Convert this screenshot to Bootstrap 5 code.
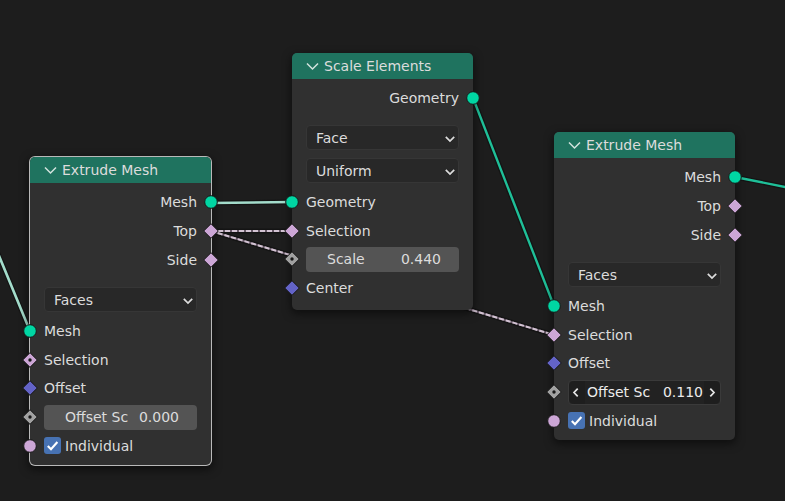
<!DOCTYPE html>
<html lang="en">
<head>
<meta charset="utf-8">
<meta name="viewport" content="width=device-width, initial-scale=1">
<title>Geometry Nodes</title>
<link href="https://cdn.jsdelivr.net/npm/bootstrap@5.3.0/dist/css/bootstrap.min.css" rel="stylesheet">
<style>
  body { background: #1d1d1d; color: #dcdcdc; font: 14px/20px "DejaVu Sans", sans-serif; }
  .node-canvas { min-height: 100vh; }
  .wires { inset: 0; z-index: 0; }
  .wires .shade { stroke: #141414; stroke-width: 5; }
  .wires .geo { stroke: #1fbf98; stroke-width: 2.4; }
  .wires .geo-active { stroke: #a3dccb; stroke-width: 2.6; }
  .wires .field-link { stroke: #d3c3d3; stroke-width: 2; stroke-dasharray: 5 2; }
  .wires .field-base { stroke: #675967; stroke-width: 2; }

  .node { width: 181px; background: #303030; border-radius: 5px; box-shadow: 0 3px 9px 1px rgba(0, 0, 0, .5); z-index: 1; padding-bottom: 5px; }
  .node.selected { box-shadow: 0 0 0 1px #b9b9b9, 0 3px 9px 2px rgba(0, 0, 0, .5); }
  .node-a { left: 30px; top: 157px; }
  .node-b { left: 292px; top: 53px; padding-bottom: 8px; }
  .node-c { left: 554px; top: 132px; }

  .node-title { height: 26px; padding: 0 14px; gap: 5px; background: #1f735f; border-radius: 5px 5px 0 0; }
  .node-title h2 { font-size: 14px; line-height: 20px; }
  .fold { width: 13px; height: 20px; color: #d3e3de; }

  .outs { padding-top: 5px; }
  .sockets { display: grid; grid-auto-rows: 1fr; }
  .n1 { min-height: 33px; }
  .n3 { min-height: 91px; }
  .n4 { min-height: 114px; }
  .n5 { min-height: 143px; }
  .sock { padding: 0 14px; }
  .options { padding: 13px 14px 5px; gap: 8px; }

  .pin { width: 16px; height: 16px; top: 50%; transform: translateY(-50%); }
  .pin-in { left: -8px; }
  .pin-out { right: -8px; }

  .options .form-select {
    height: 25px; padding: 0 24px 0 9px; font-size: 14px; line-height: 20px; color: #dcdcdc;
    background-color: #282828; border: 1px solid #363636; border-radius: 4px;
    background-image: url("data:image/svg+xml,%3Csvg xmlns='http://www.w3.org/2000/svg' viewBox='0 0 12 8'%3E%3Cpath d='M1.8 1.8 6 6 10.2 1.8' fill='none' stroke='%23dcdcdc' stroke-width='1.7'/%3E%3C/svg%3E");
    background-size: 12px 8px; background-position: right 2px top 9px;
  }
  .value-box { height: 25px; padding: 0 18px 0 21px; background: #545454; border-radius: 4px; }
  .value-box input { min-width: 0; padding: 0; border: 0; outline: 0; background: transparent; color: #dcdcdc; text-align: right; line-height: 20px; }
  .value-box.hot { padding: 0; background: #222; border: 1px solid #3a3a3a; color: #ececec; }
  .value-box.hot input { color: #ececec; }
  .step { width: 16px; height: 23px; background: #1e1e1e; color: #e6e6e6; }
  .value-box.hot label { padding-left: 2px; }
  .value-box.hot .step-up { margin-left: 1px; }
  .sock .form-check-input { width: 17px; height: 17px; margin: 0 4px 0 0; border: 0; border-radius: 3px; }
  .sock .form-check-input:checked {
    background-color: #4772b3; background-size: 17px 17px;
    background-image: url("data:image/svg+xml,%3Csvg xmlns='http://www.w3.org/2000/svg' viewBox='0 0 17 17'%3E%3Cpath d='M3.8 8.9 7 12.2 13.4 5' fill='none' stroke='%23fff' stroke-width='2.1'/%3E%3C/svg%3E");
  }
</style>
<script src="https://cdn.jsdelivr.net/npm/bootstrap@5.3.0/dist/js/bootstrap.bundle.min.js"></script>
</head>
<body>
<svg class="d-none" aria-hidden="true">
  <symbol id="geo" viewBox="0 0 16 16"><circle cx="8" cy="8" r="6.3" fill="#00d6a3" stroke="#171717"/></symbol>
  <symbol id="bool" viewBox="0 0 16 16"><path d="M8 .7 15.3 8 8 15.3.7 8Z" fill="#cca6d6" stroke="#171717"/></symbol>
  <symbol id="bool-dot" viewBox="0 0 16 16"><path d="M8 .7 15.3 8 8 15.3.7 8Z" fill="#cca6d6" stroke="#171717"/><circle cx="8" cy="8" r="1.7" fill="#171717"/></symbol>
  <symbol id="vec" viewBox="0 0 16 16"><path d="M8 .7 15.3 8 8 15.3.7 8Z" fill="#6363c7" stroke="#171717"/></symbol>
  <symbol id="num" viewBox="0 0 16 16"><path d="M8 .7 15.3 8 8 15.3.7 8Z" fill="#a1a1a1" stroke="#171717"/><circle cx="8" cy="8" r="1.7" fill="#171717"/></symbol>
  <symbol id="single" viewBox="0 0 16 16"><circle cx="8" cy="8" r="6.3" fill="#cca6d6" stroke="#171717"/></symbol>
  <symbol id="chev" viewBox="0 0 13 20"><path d="M1 7.5 6.5 13 12 7.5" fill="none" stroke="currentColor" stroke-width="1.5"/></symbol>
  <symbol id="prev" viewBox="0 0 16 23"><path d="M8.7 7.7 5 11.5 8.7 15.3" fill="none" stroke="currentColor" stroke-width="1.7"/></symbol>
  <symbol id="next" viewBox="0 0 16 23"><path d="M6.3 7.7 10 11.5 6.3 15.3" fill="none" stroke="currentColor" stroke-width="1.7"/></symbol>
</svg>

<main class="node-canvas position-relative overflow-hidden">
  <svg class="wires position-absolute w-100 h-100" fill="none" aria-hidden="true">
    <path class="shade" d="M-10 234 30 331M211 203 292 202M473 98 554 306M735 177 800 190M211 231 292 231M211 231 554 335"/>
    <path class="geo-active" d="M-10 234 30 331M211 203 292 202"/>
    <path class="geo" d="M473 98 554 306M735 177 800 190"/>
    <path class="field-base" d="M211 231 292 231M211 231 554 335"/>
    <path class="field-link" d="M211 231 292 231M211 231 554 335"/>
  </svg>

  <section class="node node-a selected position-absolute">
    <header class="node-title d-flex align-items-center">
      <button class="fold btn p-0 border-0 d-flex" type="button" aria-label="Collapse"><svg width="13" height="20"><use href="#chev"/></svg></button>
      <h2 class="m-0 fw-normal">Extrude Mesh</h2>
    </header>
    <div class="outs sockets n3 text-end">
      <div class="sock position-relative d-flex align-items-center justify-content-end">Mesh<svg class="pin pin-out position-absolute"><use href="#geo"/></svg></div>
      <div class="sock position-relative d-flex align-items-center justify-content-end">Top<svg class="pin pin-out position-absolute"><use href="#bool"/></svg></div>
      <div class="sock position-relative d-flex align-items-center justify-content-end">Side<svg class="pin pin-out position-absolute"><use href="#bool"/></svg></div>
    </div>
    <div class="options d-flex flex-column">
      <select class="form-select" aria-label="Mode"><option>Faces</option></select>
    </div>
    <div class="sockets n5">
      <div class="sock position-relative d-flex align-items-center"><svg class="pin pin-in position-absolute"><use href="#geo"/></svg>Mesh</div>
      <div class="sock position-relative d-flex align-items-center"><svg class="pin pin-in position-absolute"><use href="#bool-dot"/></svg>Selection</div>
      <div class="sock position-relative d-flex align-items-center"><svg class="pin pin-in position-absolute"><use href="#vec"/></svg>Offset</div>
      <div class="sock position-relative d-flex align-items-center"><svg class="pin pin-in position-absolute"><use href="#num"/></svg>
        <div class="value-box d-flex align-items-center w-100"><label class="text-nowrap" for="a-scale">Offset Sc</label><input class="flex-fill w-25" id="a-scale" type="text" value="0.000"></div>
      </div>
      <div class="sock position-relative d-flex align-items-center"><svg class="pin pin-in position-absolute"><use href="#single"/></svg>
        <input class="form-check-input" id="a-ind" type="checkbox" checked><label for="a-ind">Individual</label>
      </div>
    </div>
  </section>

  <section class="node node-b position-absolute">
    <header class="node-title d-flex align-items-center">
      <button class="fold btn p-0 border-0 d-flex" type="button" aria-label="Collapse"><svg width="13" height="20"><use href="#chev"/></svg></button>
      <h2 class="m-0 fw-normal">Scale Elements</h2>
    </header>
    <div class="outs sockets n1">
      <div class="sock position-relative d-flex align-items-center justify-content-end">Geometry<svg class="pin pin-out position-absolute"><use href="#geo"/></svg></div>
    </div>
    <div class="options d-flex flex-column">
      <select class="form-select" aria-label="Domain"><option>Face</option></select>
      <select class="form-select" aria-label="Scale mode"><option>Uniform</option></select>
    </div>
    <div class="sockets n4">
      <div class="sock position-relative d-flex align-items-center"><svg class="pin pin-in position-absolute"><use href="#geo"/></svg>Geometry</div>
      <div class="sock position-relative d-flex align-items-center"><svg class="pin pin-in position-absolute"><use href="#bool"/></svg>Selection</div>
      <div class="sock position-relative d-flex align-items-center"><svg class="pin pin-in position-absolute"><use href="#num"/></svg>
        <div class="value-box d-flex align-items-center w-100"><label class="text-nowrap" for="b-scale">Scale</label><input class="flex-fill w-25" id="b-scale" type="text" value="0.440"></div>
      </div>
      <div class="sock position-relative d-flex align-items-center"><svg class="pin pin-in position-absolute"><use href="#vec"/></svg>Center</div>
    </div>
  </section>

  <section class="node node-c position-absolute">
    <header class="node-title d-flex align-items-center">
      <button class="fold btn p-0 border-0 d-flex" type="button" aria-label="Collapse"><svg width="13" height="20"><use href="#chev"/></svg></button>
      <h2 class="m-0 fw-normal">Extrude Mesh</h2>
    </header>
    <div class="outs sockets n3">
      <div class="sock position-relative d-flex align-items-center justify-content-end">Mesh<svg class="pin pin-out position-absolute"><use href="#geo"/></svg></div>
      <div class="sock position-relative d-flex align-items-center justify-content-end">Top<svg class="pin pin-out position-absolute"><use href="#bool"/></svg></div>
      <div class="sock position-relative d-flex align-items-center justify-content-end">Side<svg class="pin pin-out position-absolute"><use href="#bool"/></svg></div>
    </div>
    <div class="options d-flex flex-column">
      <select class="form-select" aria-label="Mode"><option>Faces</option></select>
    </div>
    <div class="sockets n5">
      <div class="sock position-relative d-flex align-items-center"><svg class="pin pin-in position-absolute"><use href="#geo"/></svg>Mesh</div>
      <div class="sock position-relative d-flex align-items-center"><svg class="pin pin-in position-absolute"><use href="#bool"/></svg>Selection</div>
      <div class="sock position-relative d-flex align-items-center"><svg class="pin pin-in position-absolute"><use href="#vec"/></svg>Offset</div>
      <div class="sock position-relative d-flex align-items-center"><svg class="pin pin-in position-absolute"><use href="#num"/></svg>
        <div class="value-box hot d-flex align-items-center w-100">
          <button class="step btn p-0 border-0 rounded-start rounded-0 d-flex flex-shrink-0" type="button" aria-label="Decrease"><svg width="16" height="23"><use href="#prev"/></svg></button>
          <label class="text-nowrap" for="c-scale">Offset Sc</label><input class="flex-fill w-25" id="c-scale" type="text" value="0.110">
          <button class="step step-up btn p-0 border-0 rounded-end rounded-0 d-flex flex-shrink-0" type="button" aria-label="Increase"><svg width="16" height="23"><use href="#next"/></svg></button>
        </div>
      </div>
      <div class="sock position-relative d-flex align-items-center"><svg class="pin pin-in position-absolute"><use href="#single"/></svg>
        <input class="form-check-input" id="c-ind" type="checkbox" checked><label for="c-ind">Individual</label>
      </div>
    </div>
  </section>
</main>
</body>
</html>
